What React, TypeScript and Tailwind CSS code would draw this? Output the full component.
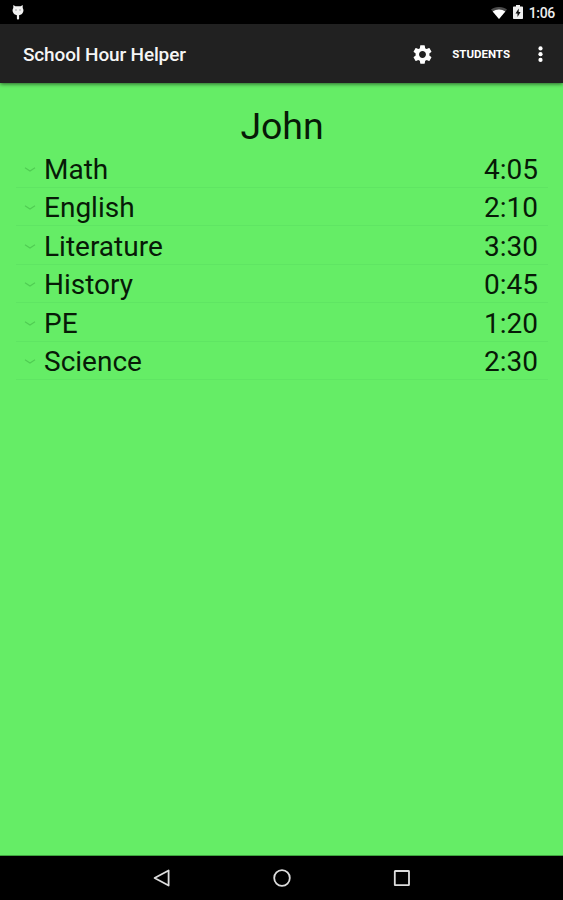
import { MdSettings } from "react-icons/md";

type Subject = {
  name: string;
  time: string;
};

const student = "John";

const subjects: Subject[] = [
  { name: "Math", time: "4:05" },
  { name: "English", time: "2:10" },
  { name: "Literature", time: "3:30" },
  { name: "History", time: "0:45" },
  { name: "PE", time: "1:20" },
  { name: "Science", time: "2:30" },
];

function StatusBar() {
  return (
    <div className="flex h-6 shrink-0 items-center justify-between bg-black pl-3 pr-2 text-white">
      <svg className="h-[17px] w-3" viewBox="0 0 12 17" fill="none">
        <path d="M1.3 1L3.4 2.2H8.6L10.7 1V4C11.5 5.2 11.7 6.6 11.1 8C10.5 9.8 9 11 7.1 11.2V14.6C7.1 15.9 4.9 15.9 4.9 14.6V11.2C3 11 1.5 9.8.9 8C.3 6.6.5 5.2 1.3 4Z" fill="#f2f2f2" />
        <circle cx="4" cy="6" r=".7" fill="#888" />
        <circle cx="8" cy="6" r=".7" fill="#888" />
      </svg>
      <div className="flex items-center">
        <svg className="mt-px h-3 w-4" viewBox="0 0 16 12">
          <path d="M0 2.6C4.6-.9 11.4-.9 16 2.6L8 12Z" fill="#4a4a4a" />
          <path d="M1.7 4.5C5.2 1.8 10.8 1.8 14.3 4.5L8 12Z" fill="#fff" />
        </svg>
        <svg className="ml-[6px] h-[14px] w-[10px]" viewBox="0 0 10 14">
          <path d="M3 0H7V1.5H9.2Q10 1.5 10 2.3V13.2Q10 14 9.2 14H.8Q0 14 0 13.2V2.3Q0 1.5.8 1.5H3Z" fill="#eee" />
          <path d="M5.7 3.5L2.5 8.4H4.5V12L7.6 7H5.7Z" fill="#111" />
        </svg>
        <span className="ml-[6px] mt-0.5 text-[14px] font-medium leading-6 tracking-[-0.3px] text-[#eee]">1:06</span>
      </div>
    </div>
  );
}

function ActionBar() {
  return (
    <header className="z-10 flex h-[59px] shrink-0 items-center bg-[#212121] pl-[23px] pr-5 text-white shadow-[0_1px_4px_rgba(0,0,0,0.6)]">
      <h1 className="flex-1 pt-[3px] text-[19px] font-medium leading-6 tracking-[-0.15px] text-[#f5f5f5]">School Hour Helper</h1>
      <MdSettings className="mt-px size-[23px]" />
      <button className="ml-[18px] pt-[3px] text-[11.5px] font-bold">STUDENTS</button>
      <svg className="ml-[28px] mt-px h-4 w-[5px]" viewBox="0 0 5 16" fill="#fff">
        <circle cx="2.5" cy="2.4" r="2.1" />
        <circle cx="2.5" cy="8.2" r="2.1" />
        <circle cx="2.5" cy="13.9" r="2.1" />
      </svg>
    </header>
  );
}

function SubjectRow({ name, time }: Subject) {
  return (
    <li className="flex h-[38.5px] items-center border-b border-[#5fe563] pl-2 pr-[10px] text-[28px] text-[#071a07]">
      <svg className="mt-[3px] h-[5px] w-3" viewBox="0 0 12 5" fill="none" stroke="#50cc53" strokeWidth="1.1">
        <path d="M1 .7L6 4L11 .7" />
      </svg>
      <span className="ml-2 flex-1 pt-[4px] leading-[34px]">{name}</span>
      <span className="pt-[4px] leading-[34px]">{time}</span>
    </li>
  );
}

function NavBar() {
  return (
    <nav className="flex h-[44px] shrink-0 items-center justify-center gap-[102px] bg-black">
      <svg className="size-[18px]" viewBox="0 0 18 18" fill="none" stroke="#ddd" strokeWidth="1.8">
        <path d="M15.6 1.5V16.5L1.6 9Z" strokeLinejoin="round" />
      </svg>
      <svg className="size-[18px]" viewBox="0 0 18 18" fill="none" stroke="#ddd" strokeWidth="1.8">
        <circle cx="9" cy="9" r="7.8" />
      </svg>
      <svg className="size-[18px]" viewBox="0 0 18 18" fill="none" stroke="#ddd" strokeWidth="1.8">
        <rect x="1.8" y="2" width="14.2" height="14.2" rx=".5" />
      </svg>
    </nav>
  );
}

export default function App() {
  return (
    <div className="flex h-screen w-full flex-col bg-[#65ed66] font-[Roboto,sans-serif]">
      <StatusBar />
      <ActionBar />
      <main className="flex-1 border-b border-[#3fa53f] pl-4 pr-[15px] pt-[20px]">
        <h2 className="text-center text-[37.5px] leading-[46px] tracking-[-0.1px] text-[#071a07]">{student}</h2>
        <ul>
          {subjects.map((subject) => (
            <SubjectRow key={subject.name} {...subject} />
          ))}
        </ul>
      </main>
      <NavBar />
    </div>
  );
}
